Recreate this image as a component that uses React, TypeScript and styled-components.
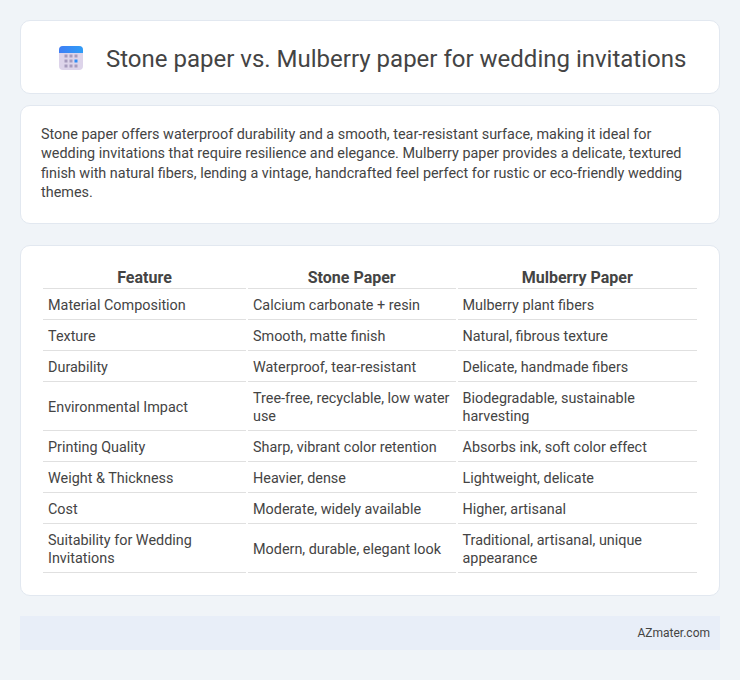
import React from 'react'
import styled, { createGlobalStyle } from 'styled-components'

const rows = [
  ['Material Composition', 'Calcium carbonate + resin', 'Mulberry plant fibers'],
  ['Texture', 'Smooth, matte finish', 'Natural, fibrous texture'],
  ['Durability', 'Waterproof, tear-resistant', 'Delicate, handmade fibers'],
  ['Environmental Impact', 'Tree-free, recyclable, low water use', 'Biodegradable, sustainable harvesting'],
  ['Printing Quality', 'Sharp, vibrant color retention', 'Absorbs ink, soft color effect'],
  ['Weight & Thickness', 'Heavier, dense', 'Lightweight, delicate'],
  ['Cost', 'Moderate, widely available', 'Higher, artisanal'],
  ['Suitability for Wedding Invitations', 'Modern, durable, elegant look', 'Traditional, artisanal, unique appearance']
]

const Global = createGlobalStyle`
  html, body {
    margin: 0;
    padding: 0;
    background: #f0f4f8;
  }
  body {
    font-family: Roboto, "Liberation Sans", sans-serif;
    color: #444;
  }
`

const Page = styled.div`
  width: 700px;
  margin: 0 auto;
  padding: 20px 0 30px;
`

const Card = styled.div`
  background: #fff;
  border: 1px solid #e2e8f0;
  border-radius: 10px;
  box-sizing: border-box;
`

const Header = styled(Card)`
  height: 74px;
  margin-bottom: 11px;
  display: flex;
  align-items: center;
  padding: 2px 0 0 38px;
  gap: 23px;
`

const Title = styled.h1`
  margin: 0;
  padding-top: 2px;
  font-size: 24px;
  font-weight: 400;
  color: #444;
`

const Intro = styled(Card)`
  height: 119px;
  margin-bottom: 21px;
  padding: 19px 20px;
  font-size: 14.4px;
  line-height: 19.44px;
  color: #444;
`

const TableCard = styled(Card)`
  height: 351px;
  padding: 20px 20px 0;
`

const Table = styled.table`
  width: 100%;
  border-collapse: separate;
  border-spacing: 2px 0;
  font-size: 14.4px;
  table-layout: fixed;
`

const Head = styled.th`
  font-size: 16px;
  font-weight: 700;
  height: 21px;
  padding: 0 0 1px;
  text-align: center;
  vertical-align: bottom;
  line-height: 18px;
  border-bottom: 1px solid #e0e0e0;
  color: #444;
`

const Cell = styled.td`
  padding: 8px 5px 4px;
  line-height: 18px;
  border-bottom: 1px solid #e0e0e0;
  vertical-align: middle;
  color: #444;
`

const Footer = styled.div`
  height: 34px;
  margin-top: 20px;
  background: #e8eef8;
  display: flex;
  align-items: center;
  justify-content: flex-end;
  padding-right: 10px;
  font-size: 12px;
  color: #444;
`

const CalendarIcon = () => (
  <svg width="24" height="24" viewBox="0 0 24 24">
    <defs>
      <linearGradient id="bar" x1="0" y1="0" x2="1" y2="0">
        <stop offset="0" stopColor="#3f7ef5" />
        <stop offset="1" stopColor="#2f9df6" />
      </linearGradient>
    </defs>
    <rect x="0" y="0" width="24" height="24" rx="4" fill="#ddd4ea" />
    <path d="M0 7V4a4 4 0 0 1 4-4h16a4 4 0 0 1 4 4v3z" fill="url(#bar)" />
    {[5.5, 10.5, 15.5].map((x) =>
      [8.5, 13.5, 18.5].map((y) => (
        <rect key={`${x}-${y}`} x={x} y={y} width="3" height="3" fill={x === 15.5 && y === 13.5 ? '#2f8cf5' : '#a79bbd'} />
      ))
    )}
  </svg>
)

export default function App() {
  return (
    <Page>
      <Global />
      <Header>
        <CalendarIcon />
        <Title>Stone paper vs. Mulberry paper for wedding invitations</Title>
      </Header>
      <Intro>
        Stone paper offers waterproof durability and a smooth, tear-resistant surface, making it ideal for wedding
        invitations that require resilience and elegance. Mulberry paper provides a delicate, textured finish with
        natural fibers, lending a vintage, handcrafted feel perfect for rustic or eco-friendly wedding themes.
      </Intro>
      <TableCard>
        <Table>
          <colgroup>
            <col style={{ width: 203 }} />
            <col style={{ width: 207.5 }} />
            <col />
          </colgroup>
          <thead>
            <tr>
              <Head>Feature</Head>
              <Head>Stone Paper</Head>
              <Head>Mulberry Paper</Head>
            </tr>
          </thead>
          <tbody>
            {rows.map((r) => (
              <tr key={r[0]}>
                {r.map((c) => (
                  <Cell key={c}>{c}</Cell>
                ))}
              </tr>
            ))}
          </tbody>
        </Table>
      </TableCard>
      <Footer>AZmater.com</Footer>
    </Page>
  )
}
